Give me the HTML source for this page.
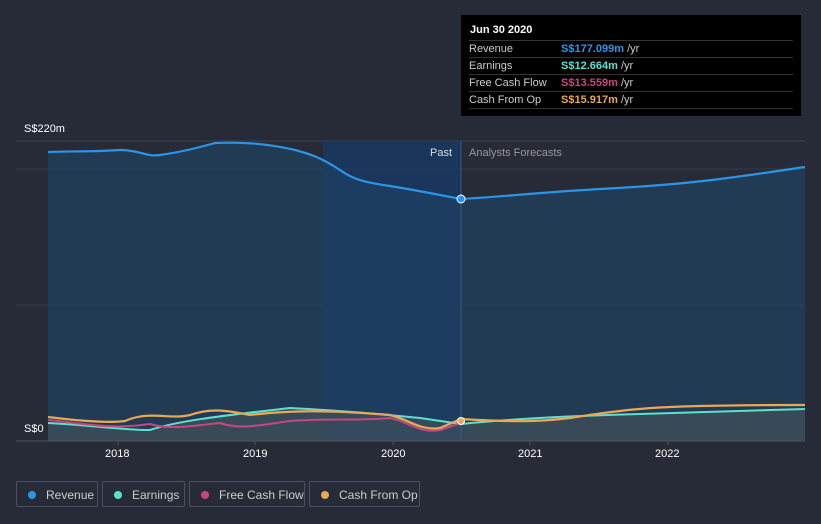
<!DOCTYPE html>
<html><head><style>
body{margin:0;width:821px;height:524px;background:#262b37;font-family:"Liberation Sans",sans-serif;overflow:hidden;position:relative}
.t{position:absolute;color:#fff;font-size:11px}
.tip{position:absolute;left:461px;top:15px;width:340px;height:101px;background:#000;color:#ccc;font-size:11px}
.tip .r{position:absolute;left:8px;width:324px;border-top:1px solid #333;height:17px;line-height:17px}
.tip b{position:absolute;left:92px;font-weight:bold}
.lg{position:absolute;top:481px;height:26px;border:1px solid #4a5060;border-radius:2px;color:#ccc;font-size:12px;line-height:26px;box-sizing:border-box}
.lg i{display:inline-block;width:8px;height:8px;border-radius:50%;margin:0 10px 0 11px}
</style></head><body>
<svg width="821" height="524" style="position:absolute;left:0;top:0">
<defs><linearGradient id="g" x1="0" y1="0" x2="0" y2="1"><stop offset="0" stop-color="#1a4a7a" stop-opacity=".9"/><stop offset="1" stop-color="#1a3e6a" stop-opacity=".9"/></linearGradient></defs>
<rect x="323" y="141" width="138" height="300" fill="#1b3457"/>
<line x1="16" y1="141" x2="805" y2="141" stroke="#3a404d"/>
<line x1="16" y1="305" x2="805" y2="305" stroke="#323845"/>
<line x1="16" y1="169" x2="805" y2="169" stroke="#323845"/>
<path d="M48,152 C70,151 90,152 120,150 C140,150 145,157 160,155 C175,153 190,150 215,143 C240,142 265,143 295,150 C310,154 320,157 340,170 C355,181 370,183 390,186 C415,190 440,195 461,199 C500,197 530,193 600,189 C640,187 680,184 720,179 C760,174 790,169 805,167 L805,441 L48,441Z" fill="#22415f" fill-opacity=".75"/>
<rect x="323" y="141" width="138" height="300" fill="#1a3a66" fill-opacity=".45"/>
<path d="M48,152 C70,151 90,152 120,150 C140,150 145,157 160,155 C175,153 190,150 215,143 C240,142 265,143 295,150 C310,154 320,157 340,170 C355,181 370,183 390,186 C415,190 440,195 461,199 C500,197 530,193 600,189 C640,187 680,184 720,179 C760,174 790,169 805,167" fill="none" stroke="#2b95e6" stroke-width="2.2"/>
<path d="M48,423 C90,425 120,430 150,430 C180,420 230,415 290,408 C330,410 370,413 420,418 L461,424 C500,420 560,416 640,414 C700,412 760,410 805,409 L805,441 L48,441Z" fill="#4d5a5a" fill-opacity=".5"/>
<path d="M48,423 C90,425 120,430 150,430 C180,420 230,415 290,408 C330,410 370,413 420,418 L461,424 C500,420 560,416 640,414 C700,412 760,410 805,409" fill="none" stroke="#5de0d0" stroke-width="2"/>
<path d="M48,420 C80,423 110,430 150,424 C170,430 190,426 220,423 C240,430 260,425 290,421 C330,418 360,421 390,418 C410,422 420,434 440,430 L461,423" fill="none" stroke="#c4487e" stroke-width="2"/>
<path d="M48,417 C80,421 110,423 125,421 C150,410 170,420 190,415 C210,408 225,410 250,415 C290,410 330,410 390,415 C410,420 420,431 440,428 L461,419 C500,421 530,423 570,418 C620,410 650,407 700,406 C750,405 780,405 805,405" fill="none" stroke="#e8a855" stroke-width="2.2"/>
<line x1="461" y1="141" x2="461" y2="441" stroke="#3f5a80"/>
<line x1="16" y1="441" x2="805" y2="441" stroke="#4a5060"/>
<circle cx="461" cy="199" r="4" fill="#2b95e6" stroke="#fff" stroke-width="1"/>
<circle cx="461" cy="421" r="3.5" fill="#e8a855" stroke="#fff" stroke-width="1"/>
<g stroke="#4a5060"><line x1="118" y1="441" x2="118" y2="445"/><line x1="255" y1="441" x2="255" y2="445"/><line x1="393" y1="441" x2="393" y2="445"/><line x1="530" y1="441" x2="530" y2="445"/><line x1="668" y1="441" x2="668" y2="445"/></g>
</svg>
<div class="t" style="left:24px;top:123px">S$220m</div>
<div class="t" style="left:24px;top:423px">S$0</div>
<div class="t" style="left:430px;top:147px;color:#ddd">Past</div>
<div class="t" style="left:469px;top:147px;color:#999">Analysts Forecasts</div>
<div class="t" style="left:105px;top:448px">2018</div>
<div class="t" style="left:243px;top:448px">2019</div>
<div class="t" style="left:381px;top:448px">2020</div>
<div class="t" style="left:518px;top:448px">2021</div>
<div class="t" style="left:655px;top:448px">2022</div>
<div class="tip">
<div style="position:absolute;left:9px;top:9px;color:#fff;font-weight:bold">Jun 30 2020</div>
<div class="r" style="top:25px">Revenue<b style="color:#2b95e6">S$177.099m <span style="color:#ccc;font-weight:normal">/yr</span></b></div>
<div class="r" style="top:42px">Earnings<b style="color:#5de0d0">S$12.664m <span style="color:#ccc;font-weight:normal">/yr</span></b></div>
<div class="r" style="top:59px">Free Cash Flow<b style="color:#c4487e">S$13.559m <span style="color:#ccc;font-weight:normal">/yr</span></b></div>
<div class="r" style="top:76px">Cash From Op<b style="color:#e8a855">S$15.917m <span style="color:#ccc;font-weight:normal">/yr</span></b></div>
<div class="r" style="top:93px;height:0"></div>
</div>
<div class="lg" style="left:16px;width:82px"><i style="background:#2b95e6"></i>Revenue</div>
<div class="lg" style="left:102px;width:83px"><i style="background:#5de0d0"></i>Earnings</div>
<div class="lg" style="left:189px;width:116px"><i style="background:#c4487e"></i>Free Cash Flow</div>
<div class="lg" style="left:309px;width:111px"><i style="background:#e8a855"></i>Cash From Op</div>
</body></html>
